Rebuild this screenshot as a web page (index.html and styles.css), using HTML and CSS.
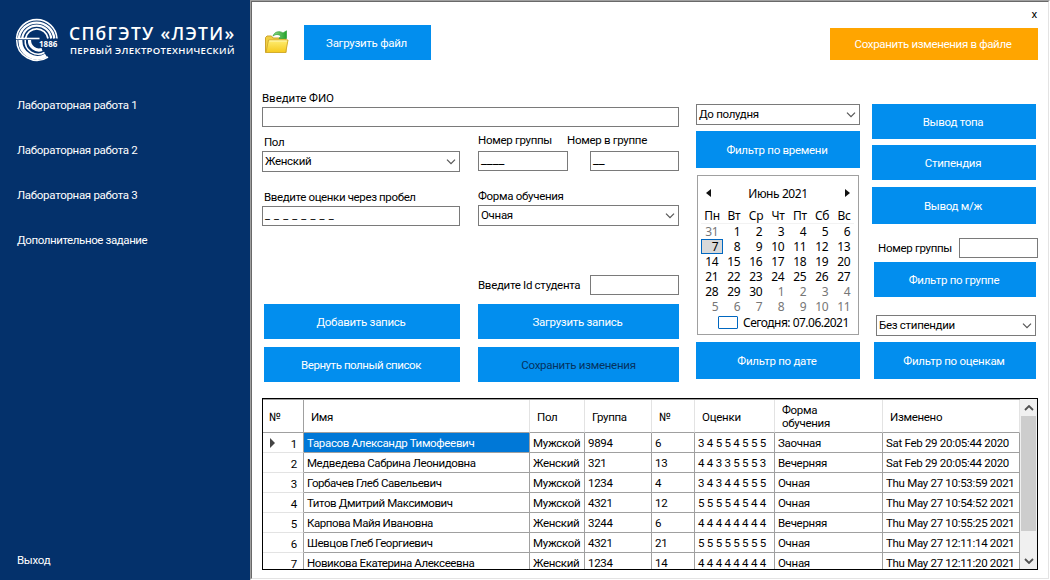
FILE: index.html
```html
<!DOCTYPE html>
<html lang="ru">
<head>
<meta charset="utf-8">
<title>СПбГЭТУ «ЛЭТИ»</title>
<link rel="stylesheet" href="styles.css">
</head>
<body>
<div class="window">
  <aside class="sidebar">
    <div class="brand">
      <svg class="emblem" width="44" height="44" viewBox="0 0 44 44" fill="none" stroke="#fff">
        <path d="M1.500 20.500A20.300 20.300 0 0 1 42 20.500" stroke-width="1.600"/>
        <path d="M3.900 20.500A17.800 17.800 0 0 1 39.300 20.500" stroke-width="2.400"/>
        <path d="M7.200 20.500A14.600 14.600 0 0 1 36.200 20.500" stroke-width="2.200"/>
        <path d="M10.500 20.500A11.400 11.400 0 0 1 33 20.500" stroke-width="1.800"/>
        <path d="M1 20.500H24.500" stroke-width="1.600"/>
        <path d="M1.700 22A20.300 20.300 0 0 0 33 39" stroke-width="1.500"/>
        <path d="M5.400 22A17 17 0 0 0 31 37.400" stroke-width="4"/>
        <path d="M10.200 22A13 13 0 0 0 29.500 34.500" stroke-width="1.500"/>
        <path d="M14.500 22A9.500 9.500 0 0 0 27 31.500" stroke-width="3.200"/>
        <text x="24" y="28.700" class="year">1886</text>
      </svg>
      <div class="brand-text"><b>СПбГЭТУ «ЛЭТИ»</b><span>ПЕРВЫЙ ЭЛЕКТРОТЕХНИЧЕСКИЙ</span></div>
    </div>
    <nav class="menu">
      <a>Лабораторная работа 1</a>
      <a>Лабораторная работа 2</a>
      <a>Лабораторная работа 3</a>
      <a class="tight">Дополнительное задание</a>
    </nav>
    <a class="exit">Выход</a>
  </aside>
  <main class="frame"><div class="panel">
    <header class="top">
      <svg class="folder" width="24" height="24" viewBox="0 0 24 24">
        <defs>
          <linearGradient id="y" x2="0" y2="1"><stop stop-color="#ffee73"/><stop offset="1" stop-color="#f5c91d"/></linearGradient>
          <linearGradient id="g" x2="1" y2="0"><stop stop-color="#9ad88a"/><stop offset="1" stop-color="#22a32c"/></linearGradient>
        </defs>
        <path d="M.5 22.500V7.500L2 6h4.500l1.500 2h12.500l.5 1.500v13z" fill="#f0cf42" stroke="#cda32c"/>
        <path d="M8 6C9.500 1.500 14.500.5 18 3l3.500-2.200V8.500h-7.500L16 6C13.500 4 10.500 4 8 6z" fill="url(#g)" stroke="#31a23a" stroke-width=".7"/>
        <path d="M3.500 10h19.500l-2.300 12.500H1z" fill="url(#y)" stroke="#d3ad2e"/>
        <path d="M4.300 11h17.500" stroke="#fff8b8"/>
      </svg>
      <button class="btn load">Загрузить файл</button>
      <div class="top-right"><span class="close">x</span><button class="btn save-file">Сохранить изменения в файле</button></div>
    </header>
    <section class="work">
      <form class="form">
        <label class="lb fio">Введите ФИО</label>
        <div class="box"></div>
        <div class="split second">
          <div class="left"><label class="lb">Пол</label><div class="box combo">Женский<svg width="10" height="6"><path d="M1 .7l4 4 4-4"/></svg></div></div>
          <div class="right numbers">
            <div><label class="lb">Номер группы</label><div class="box mask">____</div></div>
            <div class="in-group"><label class="lb">Номер в группе</label><div class="box mask">__</div></div>
          </div>
        </div>
        <div class="split third">
          <div class="left"><label class="lb">Введите оценки через пробел</label><div class="box mask spaced">_ _ _ _ _ _ _ _</div></div>
          <div class="right"><label class="lb">Форма обучения</label><div class="box combo">Очная<svg width="10" height="6"><path d="M1 .7l4 4 4-4"/></svg></div></div>
        </div>
        <div class="id-row"><label class="lb">Введите Id студента</label><div class="box"></div></div>
        <div class="actions">
          <button class="btn" type="button">Добавить запись</button><button class="btn" type="button">Загрузить запись</button>
          <button class="btn tight" type="button">Вернуть полный список</button><button class="btn dim" type="button">Сохранить изменения</button>
        </div>
      </form>
      <div class="dates">
        <div class="box combo">До полудня<svg width="10" height="6"><path d="M1 .7l4 4 4-4"/></svg></div>
        <button class="btn tall by-time">Фильтр по времени</button>
        <div class="calendar">
          <div class="month"><i class="prev"></i><span>Июнь 2021</span><i class="next"></i></div>
          <div class="week"><span>Пн</span><span>Вт</span><span>Ср</span><span>Чт</span><span>Пт</span><span>Сб</span><span>Вс</span></div>
          <div class="days">
            <s>31</s><span>1</span><span>2</span><span>3</span><span>4</span><span>5</span><span>6</span>
            <span class="now">7</span><span>8</span><span>9</span><span>10</span><span>11</span><span>12</span><span>13</span>
            <span>14</span><span>15</span><span>16</span><span>17</span><span>18</span><span>19</span><span>20</span>
            <span>21</span><span>22</span><span>23</span><span>24</span><span>25</span><span>26</span><span>27</span>
            <span>28</span><span>29</span><span>30</span><s>1</s><s>2</s><s>3</s><s>4</s>
            <s>5</s><s>6</s><s>7</s><s>8</s><s>9</s><s>10</s><s>11</s>
          </div>
          <div class="today"><i></i>Сегодня: 07.06.2021</div>
        </div>
        <button class="btn tall">Фильтр по дате</button>
      </div>
      <div class="filters">
        <button class="btn wide">Вывод топа</button>
        <button class="btn wide">Стипендия</button>
        <button class="btn wide tall gender">Вывод м/ж</button>
        <div class="group-row"><label class="lb">Номер группы</label><div class="box"></div></div>
        <button class="btn by-group">Фильтр по группе</button>
        <div class="box combo">Без стипендии<svg width="10" height="6"><path d="M1 .7l4 4 4-4"/></svg></div>
        <button class="btn tall">Фильтр по оценкам</button>
      </div>
    </section>
    <section class="grid">
      <div class="table">
        <div class="row head"><span>№</span><span>Имя</span><span>Пол</span><span>Группа</span><span>№</span><span>Оценки</span><span>Форма обучения</span><span>Изменено</span></div>
        <div class="row"><span class="num current">1</span><span class="selected">Тарасов Александр Тимофеевич</span><span>Мужской</span><span>9894</span><span>6</span><span>3 4 5 5 4 5 5 5</span><span>Заочная</span><span>Sat Feb 29 20:05:44 2020</span></div>
        <div class="row"><span class="num">2</span><span>Медведева Сабрина Леонидовна</span><span>Женский</span><span>321</span><span>13</span><span>4 4 3 3 5 5 5 3</span><span>Вечерняя</span><span>Sat Feb 29 20:05:44 2020</span></div>
        <div class="row"><span class="num">3</span><span>Горбачев Глеб Савельевич</span><span>Мужской</span><span>1234</span><span>4</span><span>3 4 3 4 4 5 5 5</span><span>Очная</span><span>Thu May 27 10:53:59 2021</span></div>
        <div class="row"><span class="num">4</span><span>Титов Дмитрий Максимович</span><span>Мужской</span><span>4321</span><span>12</span><span>5 5 5 5 4 5 4 4</span><span>Очная</span><span>Thu May 27 10:54:52 2021</span></div>
        <div class="row"><span class="num">5</span><span>Карпова Майя Ивановна</span><span>Женский</span><span>3244</span><span>6</span><span>4 4 4 4 4 4 4 4</span><span>Вечерняя</span><span>Thu May 27 10:55:25 2021</span></div>
        <div class="row"><span class="num">6</span><span>Шевцов Глеб Георгиевич</span><span>Мужской</span><span>4321</span><span>21</span><span>5 5 5 5 5 5 5 5</span><span>Очная</span><span>Thu May 27 12:11:14 2021</span></div>
        <div class="row"><span class="num">7</span><span>Новикова Екатерина Алексеевна</span><span>Женский</span><span>1234</span><span>14</span><span>4 4 4 4 4 4 4 4</span><span>Очная</span><span>Thu May 27 12:11:20 2021</span></div>
      </div>
      <div class="scroll">
        <svg width="10" height="6"><path d="M1 5l4-4 4 4"/></svg>
        <div class="thumb"></div>
        <svg class="down" width="10" height="6"><path d="M1 1l4 4 4-4"/></svg>
      </div>
    </section>
  </div></main>
</div>
</body>
</html>
```
FILE: styles.css
```css
* { box-sizing: border-box; }
body { margin: 0; font: 11.500px/14px Roboto, "Liberation Sans", sans-serif; letter-spacing: -.3px; color: #000; }
.window { display: flex; width: 1050px; height: 580px; overflow: hidden; background: #fff; }

.sidebar { display: flex; flex-direction: column; width: 250px; background: #04316b; color: #fff; padding: 18px 0 13px 15px; }
.brand { display: flex; gap: 10px; height: 80px; }
.emblem { flex: none; }
.year { font: 700 8px "Open Sans", sans-serif; letter-spacing: 0; fill: #fff; stroke: none; }
.brand-text { display: flex; flex-direction: column; font-family: "Open Sans", sans-serif; white-space: nowrap; }
.brand-text b { font-size: 17.500px; line-height: 24px; font-weight: 600; letter-spacing: 1.300px; padding-top: 3px; }
.brand-text span { font-size: 9.500px; line-height: 12px; font-weight: 600; letter-spacing: .34px; margin-left: 1px; }
.menu { display: flex; flex-direction: column; gap: 31px; padding-left: 2px; }
.menu .tight { letter-spacing: -.4px; }
.exit { margin-top: auto; padding-left: 2px; }

.frame { flex: 1; border: 1px solid; border-color: #a0a0a0 #fff #fff #a0a0a0; }
.panel { height: 100%; border: 1px solid; border-color: #696969 #e3e3e3 #e3e3e3 #696969; padding: 0 9px 8px 10px; }
.btn { display: block; border: 0; padding: 0 2px 0 0; height: 35px; background: #028eee; color: #fff; font: inherit; letter-spacing: -.28px; }
.btn.tall { height: 37px; }
.btn.tight { letter-spacing: -.45px; }
.btn.dim { color: #05325f; padding: 0; }
.box { height: 20px; border: 1px solid #7a7a7a; background: #fff; padding: 0 3px; }
.combo { display: flex; align-items: center; justify-content: space-between; height: 21px; padding: 0 3px 2px 2px; }
.combo svg { margin: 3px 0 0; }
.combo path { fill: none; stroke: #555; stroke-width: 1.200; }
.lb { display: block; height: 14px; white-space: nowrap; }

.top { display: flex; height: 89px; }
.folder { margin: 28px 15px 0 3px; }
.load { width: 127px; margin-top: 23px; }
.top-right { margin: 0 1px 0 auto; display: flex; flex-direction: column; }
.close { height: 26px; padding: 5px 1px 0 0; text-align: right; }
.save-file { width: 208px; height: 32px; background: #ffa500; letter-spacing: -.33px; }

.work { display: flex; height: 307px; }
.form { width: 417px; margin-right: 17px; }
.form .fio { height: 16px; letter-spacing: -.05px; }
.split { display: flex; gap: 18px; }
.left { width: 198px; }
.left .lb { padding-left: 2px; letter-spacing: -.37px; }
.right { width: 201px; }
.second { padding-top: 8px; }
.second .lb { height: 16px; }
.numbers { display: flex; }
.second .numbers .lb { margin-top: -2px; height: 18px; }
.numbers .box { width: 90px; }
.in-group { margin-left: auto; width: 89px; }
.in-group .lb { margin-left: -23px; }
.in-group .box { width: 89px; }
.mask { padding: 1px 2px 0; font-size: 13px; letter-spacing: 0; }
.spaced { padding-top: 2px; font-size: 11px; letter-spacing: .7px; }
.third { padding-top: 18px; }
.third .lb { height: 16px; }
.third .right { margin-top: -1px; }
.id-row { display: flex; align-items: center; justify-content: space-between; padding-left: 216px; margin-top: 49px; }
.id-row .box { width: 89px; }
.actions { display: grid; grid-template-columns: 196px 201px; gap: 8px 18px; padding: 9px 0 0 2px; }

.dates { width: 164px; margin-right: 12px; padding-top: 13px; }
.dates .btn { width: 164px; }
.by-time { margin: 6px 0 7px; }
.calendar { margin: 0 1px 7px; height: 160px; border: 1px solid #a0a0a0; padding: 9px 4px 0 3px; font: 12px/15px "Noto Sans", sans-serif; }
.month { display: flex; justify-content: space-between; align-items: center; height: 16px; padding: 0 4px 0 5px; letter-spacing: -.4px; }
.month i { border: 4px solid transparent; }
.month .prev { border-right: 5px solid #111; border-left: 0; }
.month .next { border-left: 5px solid #111; border-right: 0; }
.week, .days { display: grid; grid-template-columns: repeat(7, 22px); }
.week { height: 22px; padding-top: 7px; text-align: center; }
.days { text-align: right; border-top: 1px solid #f2f2f2; }
.days span, .days s { padding-right: 5px; height: 15px; text-decoration: none; letter-spacing: -.5px; }
.days s { color: #767676; }
.days .now { background: #d9d9d9; outline: 1px solid #0067c0; outline-offset: -1px; }
.today { display: flex; align-items: center; padding-left: 17px; letter-spacing: -.52px; white-space: nowrap; margin-top: 1px; }
.today i { width: 20px; height: 13px; border: 1px solid #0067c0; border-radius: 1px; margin-right: 5px; }

.filters { width: 166px; padding-top: 13px; }
.filters .btn { width: 162px; margin-left: 2px; }
.filters .wide { width: 164px; margin: 0 0 6px; }
.filters .gender { margin: 7px 0 14px; }
.group-row { display: flex; align-items: center; justify-content: space-between; padding-left: 6px; }
.group-row .box { width: 79px; }
.filters .by-group { margin-top: 4px; }
.filters .combo { width: 160px; margin: 18px 0 6px 4px; }

.grid { display: flex; width: 776px; height: 172px; border: 1px solid #000; overflow: hidden; }
.table { width: 757px; border-top: 1px solid #a0a0a0; }
.row { display: grid; grid-template-columns: 41px 226px 55px 67px 43px 80px 108px 137px; height: 20px; }
.row span { border-right: 1px solid #a0a0a0; border-bottom: 1px solid #a0a0a0; padding: 3px 0 0 3px; white-space: nowrap; overflow: hidden; }
.row span:nth-child(2) { letter-spacing: -.42px; }
.row .selected:nth-child(2) { letter-spacing: -.33px; }
.row span:nth-child(6) { letter-spacing: -.25px; }
.row.head { height: 33px; }
.head span { display: flex; align-items: center; padding: 2px 20px 0 7px; border-right-color: #e3e3e3; line-height: 13px; white-space: normal; }
.head span:first-child { border-right-color: #a0a0a0; padding-left: 6px; }
.row .num { position: relative; text-align: right; padding: 4px 6px 0 0; border-bottom-color: #e3e3e3; }
.current::before { content: ""; position: absolute; left: 7px; top: 5px; border: 5px solid transparent; border-left: 5px solid #444; border-right: 0; }
.row .selected { background: #0078d7; color: #fff; }
.scroll { display: flex; flex-direction: column; align-items: center; width: 17px; background: #f0f0f0; padding: 6px 1px 5px; }
.scroll path { fill: none; stroke: #505050; stroke-width: 1.800; }
.thumb { width: 15px; height: 115px; margin-top: 5px; background: #cdcdcd; }
.down { margin-top: auto; }
```
